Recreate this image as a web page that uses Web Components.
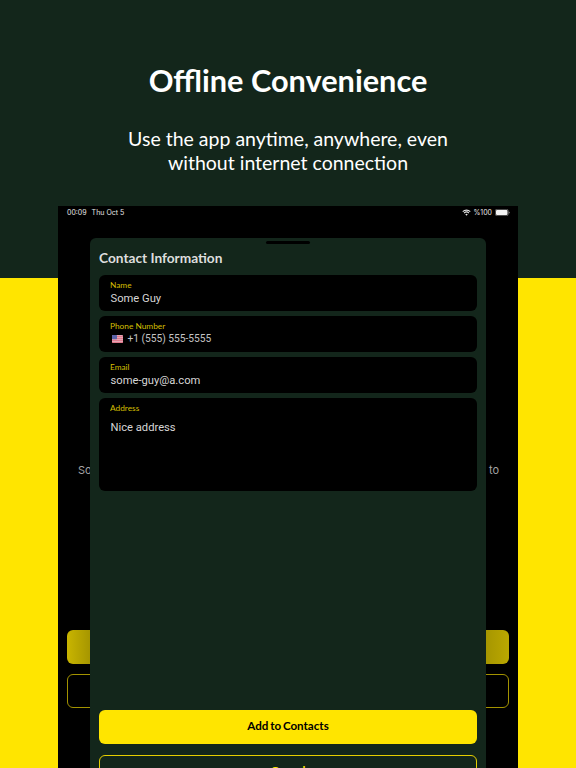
<!DOCTYPE html>
<html>
<head>
<meta charset="utf-8">
<title>Offline Convenience</title>
<style>
  html, body { margin: 0; height: 100%; overflow: hidden; }
</style>
</head>
<body>
<store-page>
  <span slot="title">Offline Convenience</span>
  <span slot="subtitle">Use the app anytime, anywhere, even<br>without internet connection</span>
  <tablet-screen>
    <contact-sheet>
      <contact-field label="Name">Some Guy</contact-field>
      <contact-field label="Phone Number" flag>+1 (555) 555-5555</contact-field>
      <contact-field label="Email">some-guy@a.com</contact-field>
      <contact-field label="Address" tall>Nice address</contact-field>
    </contact-sheet>
  </tablet-screen>
</store-page>

<script>
class StorePage extends HTMLElement {
  constructor() {
    super();
    this.attachShadow({ mode: "open" });
    this.shadowRoot.innerHTML = `
    <style>
      :host {
        display: flex;
        flex-direction: column;
        height: 768px;
        overflow: hidden;
        background: linear-gradient(#13261b 278px, #ffe500 278px);
        font-family: Lato, sans-serif;
        color: #fff;
        text-align: center;
      }
      h1 {
        margin: 61px 0 0;
        font-size: 30.7px;
        line-height: 40px;
        font-weight: 700;
      }
      p {
        margin: 26px 0 0;
        font-size: 19.5px;
        line-height: 24px;
        font-weight: 400;
      }
      .device {
        flex: 1;
        min-height: 0;
        margin: 31px 58px 0;
        display: flex;
      }
    </style>
    <h1><slot name="title"></slot></h1>
    <p><slot name="subtitle"></slot></p>
    <div class="device"><slot></slot></div>
    `;
  }
}

class TabletScreen extends HTMLElement {
  constructor() {
    super();
    this.attachShadow({ mode: "open" });
    this.shadowRoot.innerHTML = `
    <style>
      :host {
        display: flex;
        flex-direction: column;
        flex: 1;
        position: relative;
        overflow: hidden;
        background: #000;
        font-family: Inter, "Liberation Sans", sans-serif;
        color: #fff;
        text-align: left;
      }
      .status {
        display: flex;
        align-items: center;
        justify-content: space-between;
        height: 12px;
        margin: 0 8px 0 9px;
        font-size: 7px;
        color: #e6e6e6;
      }
      .left { display: flex; gap: 5px; }
      .right { display: flex; align-items: center; gap: 2px; }
      .behind {
        display: flex;
        justify-content: space-between;
        margin: 245px 19px 0 20px;
        font-size: 11px;
        line-height: 14px;
        color: #a3a3a3;
      }
      .btn {
        height: 34px;
        margin: 0 9px;
        border-radius: 6px;
        box-sizing: border-box;
      }
      .solid {
        margin-top: 153px;
        background: linear-gradient(90deg, #c9b500, #a69600 23px, #a69600 419px, #bba800);
      }
      .outline { margin-top: 10px; border: 1px solid #a39300; }
    </style>
    <div class="status">
      <div class="left"><span>00:09</span><span>Thu Oct 5</span></div>
      <div class="right">
        <svg width="9" height="7" viewBox="0 0 10 8" fill="none" stroke="#e6e6e6" stroke-width="1.2">
          <path d="M.7 3a6.2 6.2 0 0 1 8.6 0"/>
          <path d="M2.2 4.6a4 4 0 0 1 5.6 0"/>
          <path d="M5 7.6 3.6 6.1a2 2 0 0 1 2.8 0Z" fill="#e6e6e6" stroke="none"/>
        </svg>
        <span>%100</span>
        <svg width="15" height="7" viewBox="0 0 15 7" style="margin-left:1px">
          <rect x=".3" y=".3" width="12.9" height="6.4" rx="1.6" fill="none" stroke="#999" stroke-width=".6"/>
          <rect x="1" y="1" width="11.5" height="5" rx="1" fill="#f2f2f2"/>
          <path d="M13.8 2.4c.6.2.9.6.9 1.1s-.3.9-.9 1.1Z" fill="#999"/>
        </svg>
      </div>
    </div>
    <div class="behind"><span>So</span><span>to</span></div>
    <div class="btn solid"></div>
    <div class="btn outline"></div>
    <slot></slot>
    `;
  }
}

class ContactSheet extends HTMLElement {
  constructor() {
    super();
    this.attachShadow({ mode: "open" });
    this.shadowRoot.innerHTML = `
    <style>
      :host {
        position: absolute;
        top: 32px;
        left: 32px;
        right: 32px;
        bottom: -40px;
        display: flex;
        flex-direction: column;
        padding: 0 9px;
        border-radius: 6px 6px 0 0;
        background: #13261b;
      }
      .handle {
        align-self: center;
        width: 44px;
        height: 3px;
        margin-top: 3px;
        border-radius: 2px;
        background: #000;
      }
      h2 {
        margin: 4px 0 7px;
        height: 20px;
        font: 700 13.7px/20px Lato, sans-serif;
        color: #dedede;
      }
      .fields { display: flex; flex-direction: column; gap: 5px; }
      .actions {
        margin-top: auto;
        display: flex;
        flex-direction: column;
        gap: 11px;
        padding-bottom: 19px;
      }
      button {
        height: 34px;
        border-radius: 6px;
        font: 700 11.6px Lato, sans-serif;
        word-spacing: -1px;
        padding: 0 0 3px;
      }
      .add { border: 0; background: #ffe500; color: #000; }
      .cancel { border: 1px solid #e6cf00; background: transparent; color: #ffe500; }
    </style>
    <div class="handle"></div>
    <h2>Contact Information</h2>
    <div class="fields"><slot></slot></div>
    <div class="actions">
      <button class="add">Add to Contacts</button>
      <button class="cancel">Cancel</button>
    </div>
    `;
  }
}

class ContactField extends HTMLElement {
  constructor() {
    super();
    this.attachShadow({ mode: "open" });
    this.shadowRoot.innerHTML = `
    <style>
      :host {
        display: block;
        box-sizing: border-box;
        height: 36px;
        padding: 5px 12px 0 11px;
        border-radius: 6px;
        background: #000;
      }
      :host([tall]) { height: 93px; }
      .label {
        font: 400 8.3px/10px Lato, sans-serif;
        color: #d4bf00;
      }
      .value {
        display: flex;
        align-items: center;
        gap: 5px;
        font: 400 11.2px/14px Roboto, "Liberation Sans", sans-serif;
        color: #d6d6d6;
        margin-top: 2px;
        padding-left: .5px;
      }
      :host([flag]) .value { font-size: 10.2px; color: #c4c4c4; margin-top: 1px; }
      :host([tall]) .value { margin-top: 8px; }
      svg { margin-left: 1px; }
    </style>
    <div class="label"></div>
    <div class="value"><slot></slot></div>
    `;
  }

  connectedCallback() {
    this.shadowRoot.querySelector(".label").textContent = this.getAttribute("label");
    if (this.hasAttribute("flag")) {
      const ns = "http://www.w3.org/2000/svg";
      const flag = document.createElementNS(ns, "svg");
      flag.setAttribute("width", "11");
      flag.setAttribute("height", "8");
      flag.setAttribute("viewBox", "0 0 11 8");
      flag.innerHTML = `
        <rect width="11" height="8" rx="1" fill="#e9c9d4"/>
        <path d="M0 1.2h11M0 3.2h11M0 5.2h11M0 7.2h11" stroke="#d9556a" stroke-width="1"/>
        <rect width="5" height="4.2" rx=".6" fill="#5a62a8"/>`;
      this.shadowRoot.querySelector(".value").prepend(flag);
    }
  }
}

customElements.define("contact-field", ContactField);
customElements.define("contact-sheet", ContactSheet);
customElements.define("tablet-screen", TabletScreen);
customElements.define("store-page", StorePage);
</script>
</body>
</html>
